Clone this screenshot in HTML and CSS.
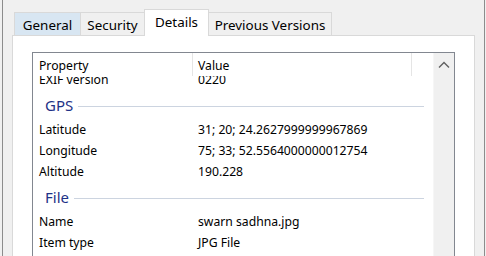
FILE: index.html
```html
<!DOCTYPE html>
<html lang="en">
<head>
    <meta charset="UTF-8">
    <title>Properties - Details</title>
    <link rel="stylesheet" href="styles.css">
</head>
<body>

<div class="frame">
    <div class="tabs">
        <div class="tab hover">General</div>
        <div class="tab">Security</div>
        <div class="tab active">Details</div>
        <div class="tab wide">Previous Versions</div>
    </div>

    <div class="panel">
        <div class="list">
            <div class="list-main">
                <div class="head">
                    <div class="col1">Property</div>
                    <div class="col2">Value</div>
                    <div class="col3"></div>
                </div>
                <div class="body">
                    <div class="rows">
                        <div class="row"><div class="col1">EXIF version</div><div class="col2">0220</div></div>

                        <div class="group"><span>GPS</span><div class="rule"></div></div>
                        <div class="row"><div class="col1">Latitude</div><div class="col2">31; 20; 24.2627999999967869</div></div>
                        <div class="row"><div class="col1">Longitude</div><div class="col2">75; 33; 52.5564000000012754</div></div>
                        <div class="row"><div class="col1">Altitude</div><div class="col2">190.228</div></div>

                        <div class="group"><span>File</span><div class="rule"></div></div>
                        <div class="row"><div class="col1">Name</div><div class="col2">swarn sadhna.jpg</div></div>
                        <div class="row"><div class="col1">Item type</div><div class="col2">JPG File</div></div>
                    </div>
                </div>
            </div>
            <div class="scrollbar">
                <div class="arrow">
                    <svg width="12" height="8" viewBox="0 0 12 8">
                        <path d="M1 6.5 L6 1.5 L11 6.5" fill="none" stroke="#606060" stroke-width="1.4"/>
                    </svg>
                </div>
            </div>
        </div>
    </div>
</div>

</body>
</html>
```
FILE: styles.css
```css
body {
    margin: 0;
    background-color: #f0f0f0;
    font-family: "Noto Sans", sans-serif;
    font-size: 12.2px;
    color: #000;
    height: 256px;
    overflow: hidden;
}

.frame {
    margin-left: 2px;
    width: 463px;
    height: 256px;
    padding: 0 9px;
    border-left: 1px solid #8c8c8c;
    border-right: 1px solid #8c8c8c;
}

.tabs {
    display: flex;
    align-items: flex-end;
    height: 35px;
    padding-left: 2px;
    font-size: 13.4px;
}

.tab {
    box-sizing: border-box;
    width: 67px;
    height: 23px;
    margin-left: -1px;
    border: 1px solid #d9d9d9;
    border-bottom: none;
    display: flex;
    justify-content: center;
    align-items: center;
    padding-top: 2px;
}

.tab:first-child {
    margin-left: 0;
}

.tab.hover {
    background-color: #d8e6f2;
}

.tab.active {
    width: 65px;
    height: 27px;
    margin-bottom: -1px;
    background-color: #fff;
    position: relative;
    padding-top: 0;
    padding-bottom: 2px;
}

.tab.wide {
    width: 124px;
}

.tab:nth-child(2) {
    width: 65px;
}

.panel {
    box-sizing: border-box;
    height: 221px;
    background-color: #fff;
    border: 1px solid #d9d9d9;
    border-bottom: none;
    padding: 16px 19px 0 19px;
}

.list {
    display: flex;
    height: 204px;
    border: 1px solid #828790;
    border-bottom: none;
}

.list-main {
    flex: 1;
    display: flex;
    flex-direction: column;
    min-width: 0;
}

.head {
    display: flex;
    height: 23px;
    flex-shrink: 0;
}

.head > div {
    display: flex;
    align-items: center;
    padding-top: 2px;
}

.col1 {
    width: 159px;
    padding-left: 6px;
    box-sizing: border-box;
    white-space: nowrap;
}

.col2 {
    width: 219px;
    padding-left: 6px;
    box-sizing: border-box;
    white-space: nowrap;
}

.head .col2 {
    border-left: 1px solid #e5e5e5;
    padding-left: 5px;
}

.head .col3 {
    flex: 1;
    border-left: 1px solid #e5e5e5;
}

.body {
    flex: 1;
    overflow: hidden;
    display: flow-root;
}

.rows {
    margin-top: -7px;
}

.row {
    display: flex;
    align-items: center;
    height: 21px;
}

.group {
    display: flex;
    align-items: center;
    height: 29px;
    padding-left: 12px;
    padding-top: 1px;
    box-sizing: border-box;
}

.group span {
    font-size: 15px;
    color: #1e3287;
}

.group .rule {
    flex: 1;
    height: 1px;
    margin: 2px 9px 0 5px;
    background-color: #ccd4e0;
}

.scrollbar {
    width: 20px;
    background-color: #f0f0f0;
    border-left: 1px solid #f6f6f6;
}

.arrow {
    height: 23px;
    display: flex;
    justify-content: center;
    align-items: center;
}
```
